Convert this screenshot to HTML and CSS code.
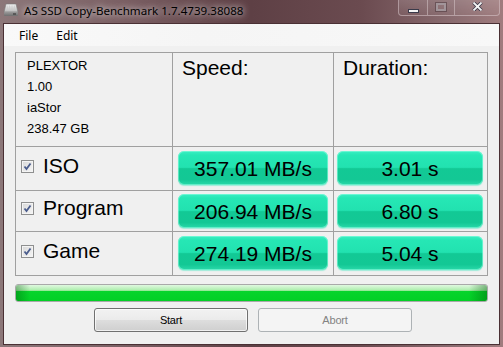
FILE: index.html
```html
<!DOCTYPE html>
<html lang="en">
<head>
    <meta charset="UTF-8">
    <title>AS SSD Copy-Benchmark</title>
    <link rel="stylesheet" href="styles.css">
</head>
<body>
    <div class="window">
        <div class="titlebar">
            <svg class="app-icon" width="16" height="14" viewBox="0 0 16 14">
                <defs>
                    <linearGradient id="drvTop" x1="0" y1="0" x2="0" y2="1">
                        <stop offset="0" stop-color="#f2f2f2"/>
                        <stop offset="1" stop-color="#b9b9b9"/>
                    </linearGradient>
                    <linearGradient id="drvFront" x1="0" y1="0" x2="0" y2="1">
                        <stop offset="0" stop-color="#9a9a9a"/>
                        <stop offset="1" stop-color="#6e6e6e"/>
                    </linearGradient>
                </defs>
                <path d="M3 1 L13 1 L15 9 L1 9 Z" fill="url(#drvTop)" stroke="#7a7a7a" stroke-width="0.6"/>
                <rect x="1" y="9" width="14" height="4" rx="0.8" fill="url(#drvFront)"/>
                <path d="M4 2.5 L5 7.5 M6.5 2.5 L7 7.5 M9 2.5 L9 7.5 M11.5 2.5 L11 7.5" stroke="#c9c9c9" stroke-width="0.7"/>
                <rect x="10" y="10.4" width="3" height="1.2" fill="#3c3c3c"/>
            </svg>
            <span class="title">AS SSD Copy-Benchmark 1.7.4739.38088</span>
            <div class="caption-buttons">
                <div class="cap-btn cap-min"><span class="glyph-min"></span></div>
                <div class="cap-btn cap-max"><span class="glyph-max"></span></div>
                <div class="cap-btn cap-close">
                    <svg width="11" height="9" viewBox="0 0 11 9">
                        <path d="M1.5 0.5 L9.5 8.5 M9.5 0.5 L1.5 8.5" stroke="#3a3a4a" stroke-width="3.4"/>
                        <path d="M1.5 0.5 L9.5 8.5 M9.5 0.5 L1.5 8.5" stroke="#f4f4f4" stroke-width="1.8"/>
                    </svg>
                </div>
            </div>
        </div>

        <div class="client">
            <div class="menubar">
                <span class="menu-item">File</span>
                <span class="menu-item">Edit</span>
            </div>

            <div class="content">
                <div class="results">
                    <div class="cell info">
                        <div>PLEXTOR</div>
                        <div>1.00</div>
                        <div>iaStor</div>
                        <div>238.47 GB</div>
                    </div>
                    <div class="cell head">Speed:</div>
                    <div class="cell head">Duration:</div>

                    <div class="cell label"><span class="check"></span>ISO</div>
                    <div class="cell box-cell"><div class="value">357.01 MB/s</div></div>
                    <div class="cell box-cell"><div class="value">3.01 s</div></div>

                    <div class="cell label"><span class="check"></span>Program</div>
                    <div class="cell box-cell"><div class="value">206.94 MB/s</div></div>
                    <div class="cell box-cell"><div class="value">6.80 s</div></div>

                    <div class="cell label"><span class="check"></span>Game</div>
                    <div class="cell box-cell"><div class="value">274.19 MB/s</div></div>
                    <div class="cell box-cell"><div class="value">5.04 s</div></div>
                </div>

                <div class="progress"><div class="progress-fill"></div></div>

                <div class="buttons">
                    <button class="btn">Start</button>
                    <button class="btn" disabled>Abort</button>
                </div>
            </div>
        </div>
    </div>
</body>
</html>
```

FILE: styles.css
```css
* {
    box-sizing: border-box;
}

body {
    margin: 0;
    padding: 0;
    width: 503px;
    height: 347px;
    overflow: hidden;
    font-family: "Liberation Sans", Arial, sans-serif;
}

.window {
    width: 503px;
    height: 347px;
    display: flex;
    flex-direction: column;
    background: linear-gradient(90deg, #8c7779 0%, #7a5f63 25%, #5e4045 50%, #6b4b50 72%, #8a6c70 90%, #a07c7e 100%);
}

/* title bar */

.titlebar {
    height: 23px;
    display: flex;
    align-items: flex-start;
    flex-shrink: 0;
}

.app-icon {
    margin: 3px 0 0 3px;
}

.title {
    margin: 3px 0 0 5px;
    font-family: "Noto Sans", "Open Sans", sans-serif;
    font-size: 11.6px;
    line-height: 15px;
    color: #000;
    text-shadow: 0 0 6px rgba(255, 255, 255, 0.75), 0 0 10px rgba(255, 255, 255, 0.45);
}

.caption-buttons {
    margin-left: auto;
    margin-right: 3px;
    display: flex;
    height: 16px;
    border: 1px solid rgba(220, 205, 207, 0.55);
    border-top: none;
    border-radius: 0 0 4px 4px;
    overflow: hidden;
}

.cap-btn {
    height: 15px;
    display: flex;
    align-items: center;
    justify-content: center;
    background: linear-gradient(rgba(255, 255, 255, 0.12), rgba(255, 255, 255, 0.02));
}

.cap-btn + .cap-btn {
    border-left: 1px solid rgba(220, 205, 207, 0.5);
}

.cap-min {
    width: 28px;
}

.cap-max {
    width: 27px;
}

.cap-close {
    width: 45px;
}

.glyph-min {
    display: block;
    width: 11px;
    height: 4px;
    margin-top: 6px;
    background: #f4f4f4;
    border: 1px solid #3a3a4a;
}

.glyph-max {
    display: block;
    width: 10px;
    height: 8px;
    margin-top: -2px;
    border: 2px solid #a2959a;
    box-shadow: 0 0 0 1px rgba(70, 50, 55, 0.5);
}

.cap-close svg {
    margin-top: -3px;
}

/* client area */

.client {
    flex: 1;
    margin: 0 3px 2px 3px;
    border: 1px solid #4a3034;
    background: #f0f0f0;
    display: flex;
    flex-direction: column;
}

.menubar {
    height: 22px;
    display: flex;
    align-items: center;
    padding-left: 6px;
    background: linear-gradient(90deg, #f9f9f9, #f5f5f5 40%, #f8f8f8);
    font-family: "Noto Sans", "Open Sans", sans-serif;
    font-size: 12px;
}

.menu-item {
    padding: 0 8px 0 9px;
    margin-right: 1px;
    color: #000;
}

.content {
    padding: 6px 11px 0 11px;
}

/* results table */

.results {
    display: grid;
    grid-template-columns: 156px 160px 153px;
    grid-template-rows: 93px 43px 40px 43px;
    gap: 1px;
    width: 473px;
    background: #a0a0a0;
    border: 1px solid #a0a0a0;
}

.cell {
    background: #f0f0f0;
}

.info {
    padding: 2px 0 0 11px;
    font-size: 13px;
    line-height: 21px;
    color: #000;
}

.head {
    padding: 3px 0 0 9px;
    font-size: 21px;
    line-height: 24px;
    color: #000;
}

.label {
    display: flex;
    align-items: center;
    padding: 0 0 6px 5px;
    font-size: 21px;
    color: #000;
}

.check {
    width: 13px;
    height: 13px;
    margin: 1px 9px 0 0;
    border: 1px solid #8e8f8f;
    background:
        url("data:image/svg+xml;utf8,<svg xmlns='http://www.w3.org/2000/svg' width='11' height='11'><path d='M2.5 5.5 L4.5 8 L8.5 2.5' fill='none' stroke='%234a5c8c' stroke-width='1.8'/></svg>") center / 11px 11px no-repeat,
        linear-gradient(135deg, #d8d8d8, #f6f6f6);
    box-shadow: inset 0 0 0 1px #f4f4f4;
}

.box-cell {
    display: flex;
    align-items: center;
    padding: 0 5px 1px 5px;
}

.box-cell:nth-child(3n) {
    padding: 0 4px 1px 3px;
}

.value {
    width: 100%;
    height: 34px;
    padding-top: 1px;
    border-radius: 6px;
    text-align: center;
    font-size: 21px;
    line-height: 33px;
    color: #000;
    background: linear-gradient(#3cefc4 0%, #26e7b5 12%, #22e2b0 48%, #12c995 52%, #13c895 84%, #2ad9aa 100%);
    box-shadow: inset 0 0 0 1px rgba(150, 255, 225, 0.55), 0 1px 1px rgba(60, 230, 190, 0.45);
}

/* progress bar */

.progress {
    margin-top: 8px;
    width: 473px;
    height: 18px;
    border: 1px solid #a9a9a9;
    border-radius: 3px;
    background: #e6e6e6;
    overflow: hidden;
}

.progress-fill {
    width: 100%;
    height: 100%;
    background:
        linear-gradient(90deg, rgba(0, 90, 10, 0.38) 0, rgba(0, 90, 10, 0) 14px, rgba(0, 90, 10, 0) calc(100% - 18px), rgba(0, 90, 10, 0.42) 100%),
        linear-gradient(#e0f8e0 0%, #b4f0b4 28%, #8fe890 36%, #07d42b 40%, #02d025 100%);
}

/* buttons */

.buttons {
    display: flex;
    justify-content: center;
    gap: 10px;
    margin-top: 6px;
    padding-left: 3px;
}

.btn {
    width: 154px;
    height: 24px;
    padding: 0;
    border: 1px solid #707070;
    border-radius: 3px;
    font-family: "Liberation Sans", Arial, sans-serif;
    font-size: 11px;
    letter-spacing: -0.2px;
    color: #000;
    background: linear-gradient(#f2f2f2 0%, #ebebeb 48%, #dddddd 52%, #cfcfcf 100%);
    box-shadow: inset 0 0 0 1px rgba(255, 255, 255, 0.7);
}

.btn:disabled {
    border-color: #adb2b5;
    color: #838383;
    background: #f4f4f4;
    box-shadow: none;
}
```
